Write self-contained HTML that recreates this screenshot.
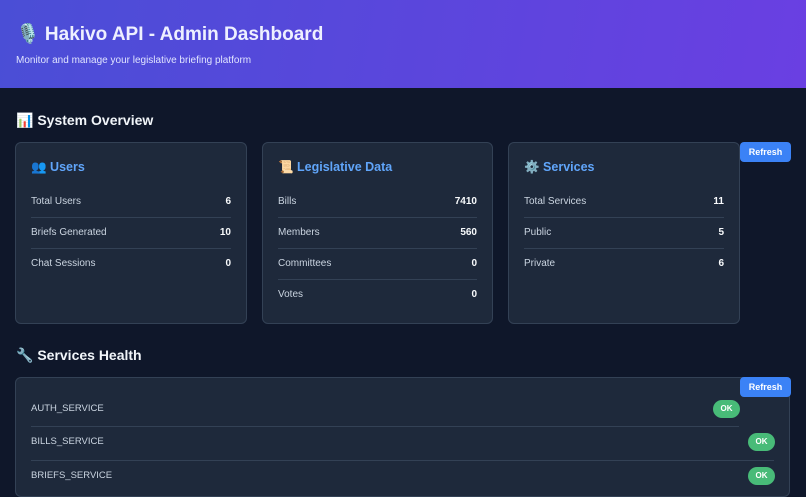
<!DOCTYPE html><html><head><meta charset="utf-8"><style>
*{margin:0;padding:0;box-sizing:border-box}
body{width:806px;height:480px;overflow:hidden;background:#0f172a;font-family:"Liberation Sans",sans-serif;color:#e2e8f0;position:relative}
.hdr{position:absolute;left:0;top:0;width:806px;height:88px;background:linear-gradient(100deg,#4a4ed6,#6a3fe2)}
.hdr h1{position:absolute;left:16px;top:22px;font-size:19px;font-weight:bold;color:#eef0ff}
.hdr p{position:absolute;left:16px;top:55px;font-size:10px;color:#e0e4ff}
h2{position:absolute;left:16px;font-size:14px;font-weight:bold;color:#f1f5f9}
.card{position:absolute;top:142px;height:182px;background:#1e293b;border:1px solid #334155;border-radius:6px}
.card h3{position:absolute;left:15px;top:17px;font-size:12.5px;font-weight:bold;color:#60a5fa}
.row{position:absolute;left:15px;right:15px;height:31px;line-height:31px;font-size:10px;color:#cbd5e1}
.row span{position:absolute;left:0;top:0}
.row b{position:absolute;right:0;top:0;color:#f8fafc;font-size:10px}
.ln{position:absolute;left:15px;right:15px;height:1px;background:#334155}
.btn{position:absolute;background:#3b82f6;color:#fff;font-size:9px;font-weight:bold;border-radius:4px;text-align:center;line-height:20px;width:51px;height:20px}
.ok{position:absolute;background:#48bb78;color:#fff;font-size:8px;font-weight:bold;border-radius:9px;width:27px;height:18px;line-height:18px;text-align:center}
.hr{position:absolute;font-size:9.5px;color:#cbd5e1}
.sep{position:absolute;height:1px;background:#334155}
</style></head><body>
<div class="hdr"><h1>🎙️ Hakivo API - Admin Dashboard</h1><p>Monitor and manage your legislative briefing platform</p></div>
<h2 style="top:112px">📊 System Overview</h2>
<div class="card" style="left:15px;width:232px"><h3>👥 Users</h3>
<div class="row" style="top:43px"><span>Total Users</span><b>6</b></div><div class="ln" style="top:74px"></div>
<div class="row" style="top:74px"><span>Briefs Generated</span><b>10</b></div><div class="ln" style="top:105px"></div>
<div class="row" style="top:105px"><span>Chat Sessions</span><b>0</b></div></div>
<div class="card" style="left:262px;width:231px"><h3>📜 Legislative Data</h3>
<div class="row" style="top:43px"><span>Bills</span><b>7410</b></div><div class="ln" style="top:74px"></div>
<div class="row" style="top:74px"><span>Members</span><b>560</b></div><div class="ln" style="top:105px"></div>
<div class="row" style="top:105px"><span>Committees</span><b>0</b></div><div class="ln" style="top:136px"></div>
<div class="row" style="top:136px"><span>Votes</span><b>0</b></div></div>
<div class="card" style="left:508px;width:232px"><h3>⚙️ Services</h3>
<div class="row" style="top:43px"><span>Total Services</span><b>11</b></div><div class="ln" style="top:74px"></div>
<div class="row" style="top:74px"><span>Public</span><b>5</b></div><div class="ln" style="top:105px"></div>
<div class="row" style="top:105px"><span>Private</span><b>6</b></div></div>
<div class="btn" style="left:740px;top:142px">Refresh</div>
<h2 style="top:347px">🔧 Services Health</h2>
<div class="card" style="left:15px;top:377px;width:775px;height:120px"></div>
<div class="btn" style="left:740px;top:377px">Refresh</div>
<div class="hr" style="left:31px;top:403px">AUTH_SERVICE</div><div class="ok" style="left:713px;top:400px">OK</div>
<div class="sep" style="left:31px;top:426px;width:708px"></div>
<div class="hr" style="left:31px;top:436px">BILLS_SERVICE</div><div class="ok" style="left:748px;top:433px">OK</div>
<div class="sep" style="left:31px;top:460px;width:743px"></div>
<div class="hr" style="left:31px;top:470px">BRIEFS_SERVICE</div><div class="ok" style="left:748px;top:467px">OK</div>
</body></html>
